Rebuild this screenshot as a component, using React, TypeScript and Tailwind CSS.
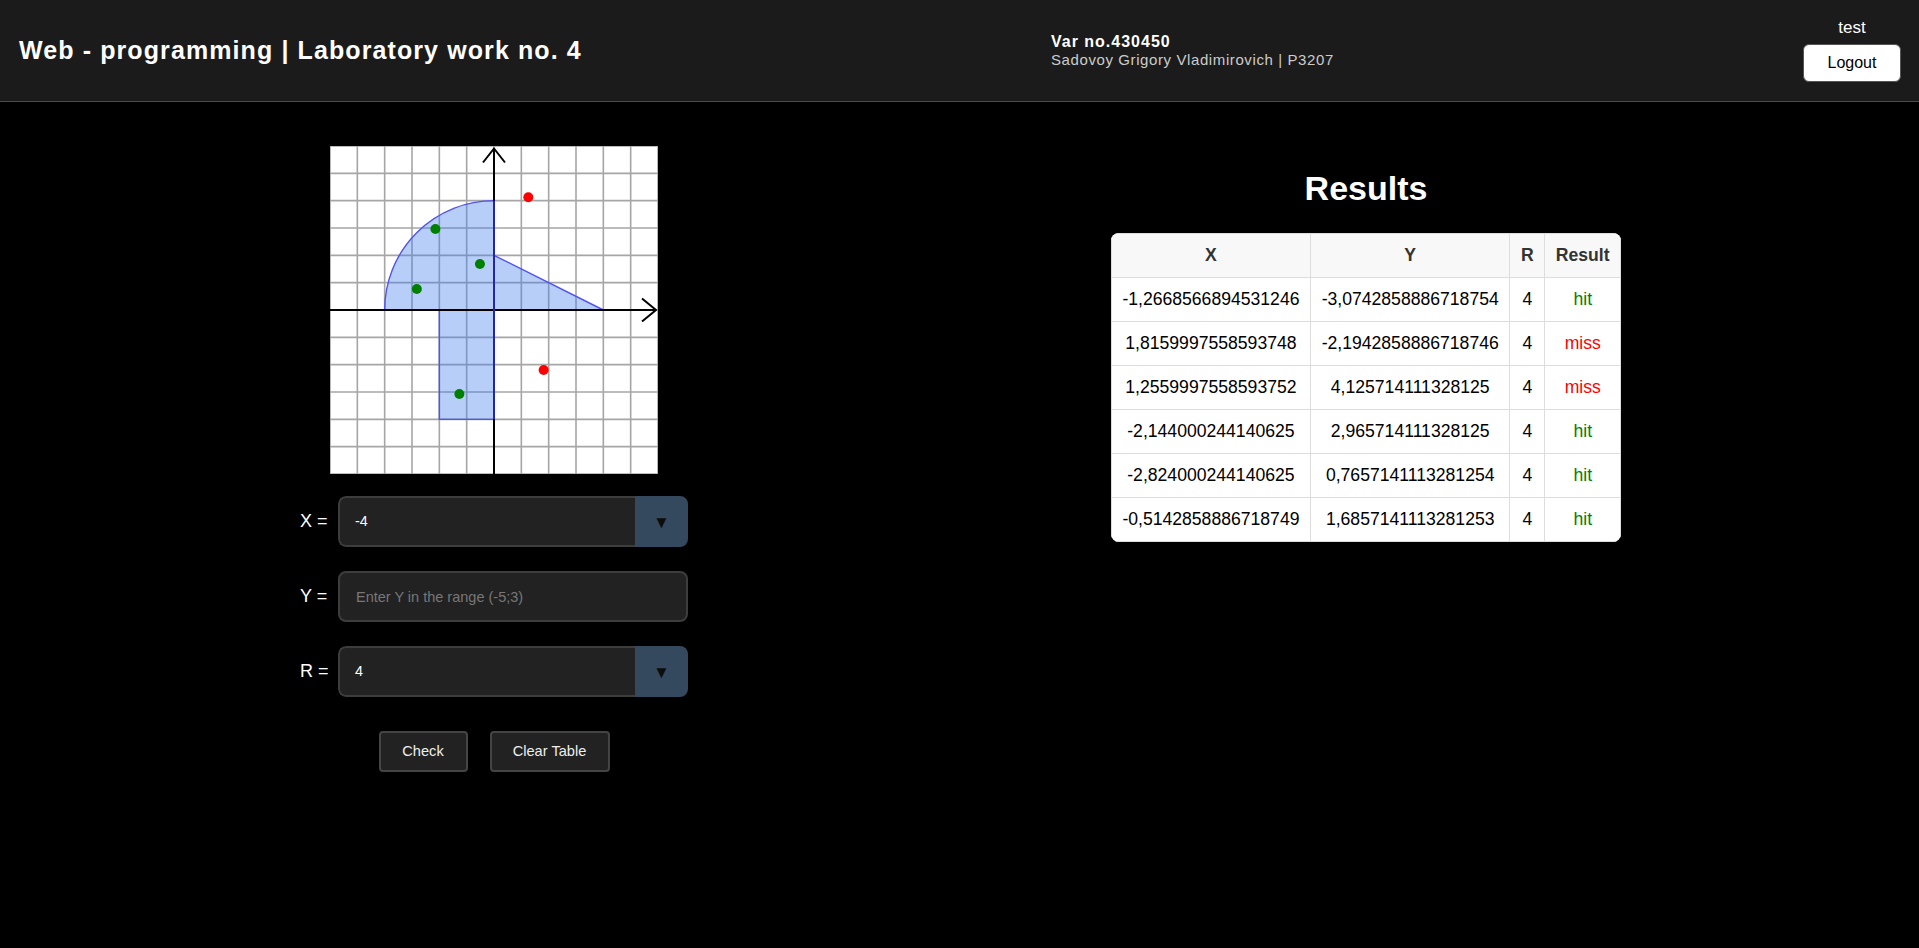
import { useState } from 'react';

const rows = [
  { x: '-1,2668566894531246', y: '-3,0742858886718754', r: '4', hit: true },
  { x: '1,8159997558593748', y: '-2,1942858886718746', r: '4', hit: false },
  { x: '1,2559997558593752', y: '4,125714111328125', r: '4', hit: false },
  { x: '-2,144000244140625', y: '2,965714111328125', r: '4', hit: true },
  { x: '-2,824000244140625', y: '0,7657141113281254', r: '4', hit: true },
  { x: '-0,5142858886718749', y: '1,6857141113281253', r: '4', hit: true },
];

const points = [
  { x: -1.2668566894531246, y: -3.0742858886718754, hit: true },
  { x: 1.8159997558593748, y: -2.1942858886718746, hit: false },
  { x: 1.2559997558593752, y: 4.125714111328125, hit: false },
  { x: -2.144000244140625, y: 2.965714111328125, hit: true },
  { x: -2.824000244140625, y: 0.7657141113281254, hit: true },
  { x: -0.5142858886718749, y: 1.6857141113281253, hit: true },
];

const cell = 'border border-[#dddddd] px-[10.6px] py-[12px] leading-[19px]';

function Graph({ r }: { r: number }) {
  const size = 328;
  const c = size / 12;
  const o = size / 2;
  const lines = Array.from({ length: 13 }, (_, i) => i * c);
  const R = r * c;

  return (
    <svg width={size} height={size} className="block bg-white">
      {lines.map((p) => (
        <line key={'v' + p} x1={p} y1={0} x2={p} y2={size} stroke="#a6a6a6" strokeWidth={1.6} />
      ))}
      {lines.map((p) => (
        <line key={'h' + p} x1={0} y1={p} x2={size} y2={p} stroke="#a6a6a6" strokeWidth={1.6} />
      ))}

      {/* area */}
      <g fill="#3b7ded" fillOpacity={0.37} stroke="#5252ee" strokeWidth={1.4}>
        <path d={`M ${o} ${o} L ${o} ${o - R} A ${R} ${R} 0 0 0 ${o - R} ${o} Z`} />
        <path d={`M ${o} ${o} L ${o} ${o - R / 2} L ${o + R} ${o} Z`} />
        <path d={`M ${o} ${o} L ${o - R / 2} ${o} L ${o - R / 2} ${o + R} L ${o} ${o + R} Z`} />
      </g>

      {/* axes */}
      <g stroke="#000" strokeWidth={2} fill="none">
        <line x1={0} y1={o} x2={326} y2={o} />
        <line x1={o} y1={size} x2={o} y2={2.5} />
        <polyline points={`${312} ${o - 11.5} ${326} ${o} ${312} ${o + 11.5}`} />
        <polyline points={`${o - 11} ${16.5} ${o} ${2.5} ${o + 11} ${16.5}`} />
      </g>
      <line x1={o} y1={o - R} x2={o} y2={o + R} stroke="#2424b0" strokeWidth={2} />

      {points.map((p, i) => (
        <circle
          key={i}
          cx={o + p.x * c}
          cy={o - p.y * c}
          r={5}
          fill={p.hit ? '#008000' : '#ff0000'}
        />
      ))}
    </svg>
  );
}

function SelectBox({ value }: { value: string }) {
  return (
    <div className="flex h-[51px] w-[350px] overflow-hidden rounded-[8px]">
      <div className="flex flex-1 items-center rounded-l-[8px] border-2 border-r-0 border-[#3d3d3d] bg-[#222222] pl-[15px] text-[14.4px] text-white">
        {value}
      </div>
      <div className="flex w-[53px] items-center justify-center bg-[#34495e] pt-[2px] text-[17px] text-[#0d0d0d]">▼</div>
    </div>
  );
}

export default function App() {
  const [y, setY] = useState('');

  return (
    <div className="flex min-h-screen flex-col bg-black font-['Liberation_Sans',Arial,sans-serif] text-white">
      <header className="flex h-[102px] items-center justify-between border-b border-[#4a4a4a] bg-[#1b1b1b] pl-[19px] pr-[18px]">
        <h1 className="text-[25px] font-bold tracking-[1.1px] text-white">Web - programming | Laboratory work no. 4</h1>
        <div className="flex flex-col">
          <span className="text-[16px] font-bold leading-[19px] tracking-[1px]">Var no.430450</span>
          <span className="text-[15px] leading-[18px] tracking-[0.6px] text-[#cccccc]">
            Sadovoy Grigory Vladimirovich | P3207
          </span>
        </div>
        <div className="flex flex-col items-center gap-[7px]">
          <span className="text-[17px] leading-[18px]">test</span>
          <button className="h-[38px] w-[98px] rounded-[6px] border border-[#555] bg-white text-[16px] text-black">
            Logout
          </button>
        </div>
      </header>

      <main className="grid flex-1 grid-cols-2 pl-[58px] pr-[117px]">
        <section className="flex flex-col items-center pt-[44px]">
          <Graph r={4} />

          <div className="mt-[22px] flex flex-col gap-[24px]">
            <div className="flex items-center">
              <label className="w-[38px] text-[18px]">X =</label>
              <SelectBox value="-4" />
            </div>
            <div className="flex items-center">
              <label className="w-[38px] text-[18px]">Y =</label>
              <input
                value={y}
                onChange={(e) => setY(e.target.value)}
                placeholder="Enter Y in the range (-5;3)"
                className="h-[51px] w-[350px] rounded-[8px] border-2 border-[#3d3d3d] bg-[#222222] pl-[16px] font-['Liberation_Sans',Arial,sans-serif] text-[14.5px] text-white outline-none placeholder:text-[#777777]"
              />
            </div>
            <div className="flex items-center">
              <label className="w-[38px] text-[18px]">R =</label>
              <SelectBox value="4" />
            </div>
          </div>

          <div className="mt-[34px] flex gap-[22px]">
            <button className="h-[41px] w-[89px] rounded-[4px] border-2 border-[#444] bg-[#222222] text-[14.6px] text-[#eeeeee]">
              Check
            </button>
            <button className="h-[41px] w-[120px] rounded-[4px] border-2 border-[#444] bg-[#222222] text-[14.6px] text-[#eeeeee]">
              Clear Table
            </button>
          </div>
        </section>

        <section className="flex flex-col items-center pt-[67px]">
          <h2 className="mb-[25px] text-[34px] font-bold leading-[39px]">Results</h2>
          <div className="overflow-hidden rounded-[8px] bg-white">
            <table className="border-collapse text-center text-[17.6px] text-black">
              <thead>
                <tr className="bg-[#f8f8f8] text-[#333333]">
                  <th className={cell}>X</th>
                  <th className={cell}>Y</th>
                  <th className={cell}>R</th>
                  <th className={cell}>Result</th>
                </tr>
              </thead>
              <tbody>
                {rows.map((row, i) => (
                  <tr key={i}>
                    <td className={cell}>{row.x}</td>
                    <td className={cell}>{row.y}</td>
                    <td className={cell}>{row.r}</td>
                    <td className={row.hit ? `${cell} text-[#008000]` : `${cell} text-[#ff0000]`}>
                      {row.hit ? 'hit' : 'miss'}
                    </td>
                  </tr>
                ))}
              </tbody>
            </table>
          </div>
        </section>
      </main>
    </div>
  );
}
